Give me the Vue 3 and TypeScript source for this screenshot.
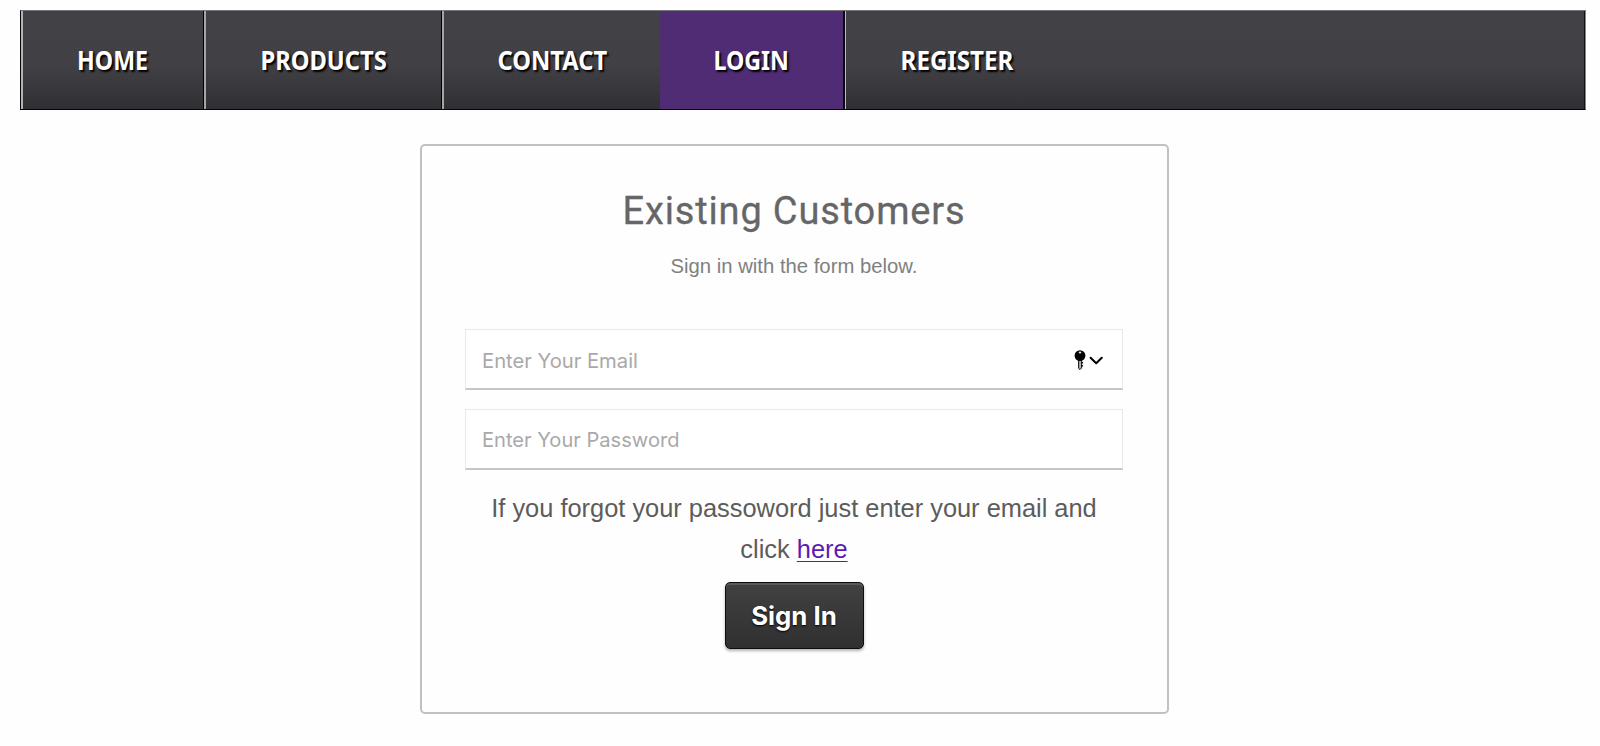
<script setup lang="ts">
import { ref } from 'vue'

interface NavItem {
  label: string
  name: string
}

const items: NavItem[] = [
  { label: 'HOME', name: 'home' },
  { label: 'PRODUCTS', name: 'products' },
  { label: 'CONTACT', name: 'contact' },
  { label: 'LOGIN', name: 'login' },
  { label: 'REGISTER', name: 'register' },
]
const current = 'login'
const email = ref('')
const password = ref('')
</script>

<template>
  <div class="page">
    <nav class="nav">
      <a v-for="item in items" :key="item.name" class="nav-item" :class="[item.name, { active: item.name === current }]">
        <span class="nav-label">{{ item.label }}</span>
      </a>
    </nav>
    <main class="card">
      <h1 class="title">Existing Customers</h1>
      <p class="subtitle">Sign in with the form below.</p>
      <form class="form" @submit.prevent>
        <div class="field">
          <input v-model="email" class="input email" type="text" placeholder="Enter Your Email" />
          <svg class="key" width="32" height="24" viewBox="0 0 32 24">
            <path d="M4.6 11h3v8L6 20.6l-1.4-1.3z" fill="#b0b0b0" stroke="#111" stroke-width="1" />
            <path d="M7.8 13h1.3v1.6H7.8zM7.8 16h1.3v1.6H7.8z" fill="#111" />
            <circle cx="6" cy="6.6" r="5.4" fill="#000" />
            <ellipse cx="6" cy="3.6" rx="1.4" ry="1" fill="#ddd" />
            <path d="M16.6 8.7l5.6 5.6 5.6-5.6" fill="none" stroke="#000" stroke-width="2" stroke-linecap="round" stroke-linejoin="round" />
          </svg>
        </div>
        <div class="field">
          <input v-model="password" class="input password" type="password" placeholder="Enter Your Password" />
        </div>
        <p class="forgot">If you forgot your passoword just enter your email and<br />click <a class="link" href="#">here</a></p>
        <button class="submit" type="submit">Sign In</button>
      </form>
    </main>
  </div>
</template>

<style>
body {
  background: #fefefe;
}
</style>

<style scoped>
.page {
  box-sizing: border-box;
  height: 746px;
  padding: 10px 14px 0 20px;
  font-family: "Liberation Sans", Arial, sans-serif;
}
.nav {
  box-sizing: border-box;
  display: flex;
  height: 100px;
  border-top: 1px solid #74767a;
  border-bottom: 1px solid #030306;
  border-left: 1px solid #08080c;
  border-right: 1px solid #85858a;
  background: linear-gradient(#424145 0%, #414044 55%, #302f33 100%);
  box-shadow: inset -1px 0 #111118;
}
.nav-item {
  box-sizing: border-box;
  display: flex;
  align-items: center;
  justify-content: center;
  height: 98px;
}
.nav-label {
  font-family: "Noto Sans", sans-serif;
  font-size: 26.5px;
  font-weight: 700;
  line-height: 36px;
  color: #fff;
  text-shadow: 2px 2px 2px #000;
  white-space: nowrap;
  transform: scaleX(0.895);
}
.home {
  width: 183px;
  border-left: 2px solid #aeb4b8;
  border-right: 1px solid #000;
}
.home .nav-label,
.login .nav-label {
  transform: scaleX(0.875);
}
.products {
  width: 238px;
  border-left: 2px solid #a6a6a6;
  border-right: 1px solid #000;
}
.contact {
  width: 218px;
  border-left: 2px solid #a6a6a6;
}
.login {
  width: 185px;
  border-right: 2px solid #0b0712;
}
.login.active {
  background: #4f2c73;
}
.register {
  width: 222px;
  border-left: 1px solid #bcbcbc;
}
.register .nav-label {
  transform: scaleX(0.91);
}
.card {
  box-sizing: border-box;
  width: 749px;
  height: 570px;
  margin: 34px 0 0 400px;
  padding: 39px 44px 0 43px;
  border: 2px solid #c1c1c1;
  border-radius: 5px;
  text-align: center;
}
.title {
  margin: 0;
  height: 52px;
  font-family: Roboto, sans-serif;
  font-size: 38px;
  font-weight: 400;
  line-height: 52px;
  letter-spacing: 0.85px;
  color: #666;
  -webkit-text-stroke: 0.3px #666;
}
.subtitle {
  margin: 17px 0 0;
  font-size: 20.3px;
  line-height: 24px;
  color: #808080;
}
.form {
  display: flex;
  flex-direction: column;
  align-items: center;
  margin-top: 51px;
}
.field {
  position: relative;
  width: 658px;
  height: 62px;
  margin-bottom: 18px;
}
.input {
  box-sizing: border-box;
  width: 100%;
  height: 61px;
  padding: 2px 16px 0 16px;
  border: 1px solid #e9e9e9;
  border-bottom: 2px solid #c6c6c6;
  border-radius: 1px;
  outline: none;
  background: #fff;
  font-family: Inter, sans-serif;
  font-size: 20.2px;
}
.input.password {
  padding-top: 1px;
  font-size: 20.1px;
}
.input::placeholder {
  color: #a9a9a9;
  opacity: 1;
}
.key {
  position: absolute;
  top: 20px;
  right: 17px;
}
.forgot {
  width: 658px;
  margin: -1px 0 0;
  font-size: 25.4px;
  line-height: 41px;
  color: #5c5c5c;
}
.link {
  color: #5b1bb2;
  text-decoration-thickness: 1px;
  text-underline-offset: 3px;
}
.submit {
  box-sizing: border-box;
  width: 139px;
  height: 67px;
  margin-top: 12px;
  padding: 0;
  border: 1px solid #0e0e0e;
  border-radius: 5px;
  background: linear-gradient(#404140, #2f302f);
  box-shadow: inset 0 2px #565b56, 0 2px 3px rgba(0, 0, 0, 0.3);
  font-family: Inter, sans-serif;
  font-size: 25.8px;
  font-weight: 700;
  color: #fff;
  text-shadow: 0 1px 2px #000;
}
</style>
